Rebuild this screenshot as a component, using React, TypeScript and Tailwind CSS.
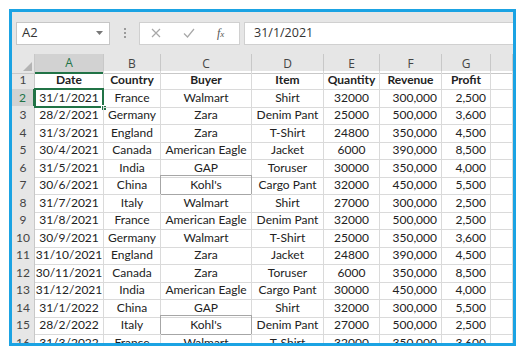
import React from 'react';

const rows: string[][] = [
  ['Date', 'Country', 'Buyer', 'Item', 'Quantity', 'Revenue', 'Profit'],
  ['31/1/2021', 'France', 'Walmart', 'Shirt', '32000', '300,000', '2,500'],
  ['28/2/2021', 'Germany', 'Zara', 'Denim Pant', '25000', '500,000', '3,600'],
  ['31/3/2021', 'England', 'Zara', 'T-Shirt', '24800', '350,000', '4,500'],
  ['30/4/2021', 'Canada', 'American Eagle', 'Jacket', '6000', '390,000', '8,500'],
  ['31/5/2021', 'India', 'GAP', 'Toruser', '30000', '350,000', '4,000'],
  ['30/6/2021', 'China', "Kohl's", 'Cargo Pant', '32000', '450,000', '5,500'],
  ['31/7/2021', 'Italy', 'Walmart', 'Shirt', '27000', '300,000', '2,500'],
  ['31/8/2021', 'France', 'American Eagle', 'Denim Pant', '32000', '500,000', '2,500'],
  ['30/9/2021', 'Germany', 'Walmart', 'T-Shirt', '25000', '350,000', '3,600'],
  ['31/10/2021', 'England', 'Zara', 'Jacket', '24800', '390,000', '4,500'],
  ['30/11/2021', 'Canada', 'Zara', 'Toruser', '6000', '350,000', '8,500'],
  ['31/12/2021', 'India', 'American Eagle', 'Cargo Pant', '30000', '450,000', '4,000'],
  ['31/1/2022', 'China', 'GAP', 'Shirt', '32000', '300,000', '5,500'],
  ['28/2/2022', 'Italy', "Kohl's", 'Denim Pant', '27000', '500,000', '2,500'],
  ['31/3/2022', 'France', 'Walmart', 'T-Shirt', '32000', '350,000', '3,600'],
];

const letters = ['A', 'B', 'C', 'D', 'E', 'F', 'G', ''];
const gridCols = 'grid grid-cols-[23px_69px_57px_91px_72px_56px_62px_49px_1fr]';

function FormulaBar() {
  return (
    <div className="flex items-center h-[42px] bg-[#e6e6e6] pl-1 pb-[9px] pt-[9px]">
      <div className="flex items-center justify-between w-[94px] h-[23px] bg-white border border-[#c6c6c6] pl-[5px] pr-[6px]">
        <span className="text-[13px] text-[#333]">A2</span>
        <svg width="7" height="4" viewBox="0 0 7 4">
          <path d="M0 0h7L3.5 4z" fill="#777" />
        </svg>
      </div>
      <div className="flex flex-col gap-[2px] w-[29px] items-center">
        <span className="w-[2px] h-[2px] bg-[#9a9a9a]" />
        <span className="w-[2px] h-[2px] bg-[#9a9a9a]" />
        <span className="w-[2px] h-[2px] bg-[#9a9a9a]" />
      </div>
      <div className="flex items-center w-[101px] h-[23px] bg-white border border-[#d0d0d0]">
        <svg className="ml-[11px]" width="10" height="10" viewBox="0 0 10 10">
          <path d="M1 1l8 8M9 1l-8 8" stroke="#a8a8a8" strokeWidth="1.2" />
        </svg>
        <svg className="ml-[22px]" width="12" height="10" viewBox="0 0 12 10">
          <path d="M1 5.5l3.5 3.5L11 1" stroke="#a8a8a8" strokeWidth="1.2" fill="none" />
        </svg>
        <span className="ml-[22px] italic text-[#555] font-['Liberation_Serif',serif] text-[12px] leading-none">
          f<span className="text-[9px]">x</span>
        </span>
      </div>
      <div className="flex items-center flex-1 h-[23px] bg-white border border-[#d0d0d0] border-r-0 ml-1 pl-[9px]">
        <span className="text-[12.5px] text-[#333]">31/1/2021</span>
      </div>
    </div>
  );
}

function ColumnHeaders() {
  return (
    <div className={`${gridCols} h-[17px] bg-[#e6e6e6] text-[12px] text-[#444]`}>
      <div className="relative border-r border-b border-[#c8c8c8]">
        <svg className="absolute right-[2px] bottom-[2px]" width="9" height="9" viewBox="0 0 9 9">
          <path d="M9 0v9H0z" fill="#b4b4b4" />
        </svg>
      </div>
      {letters.map((l, i) => (
        <div
          key={i}
          className={
            i === 0
              ? 'flex items-center justify-center bg-[#d2d2d2] text-[#217346] border-r border-[#c8c8c8] border-b-2 border-b-[#217346]'
              : 'flex items-center justify-center border-r border-b border-[#c8c8c8]'
          }
        >
          {l}
        </div>
      ))}
    </div>
  );
}

function Row({ n, cells }: { n: number; cells: string[] }) {
  const header = n === 1;
  const selRow = n === 2;
  return (
    <div className={`${gridCols} h-[17.5px] text-[12px] text-[#222]`}>
      <div
        className={
          selRow
            ? 'flex items-center justify-center bg-[#d2d2d2] text-[#217346] border-b border-[#c8c8c8] border-r-2 border-r-[#217346] text-[12px]'
            : 'flex items-center justify-center bg-[#e6e6e6] text-[#444] border-r border-b border-[#c8c8c8] text-[12px]'
        }
      >
        {n}
      </div>
      {cells.map((c, i) => {
        const right = !header && i >= 5;
        const kohls = c === "Kohl's";
        const sel = selRow && i === 0;
        return (
          <div
            key={i}
            className={[
              'relative flex items-center whitespace-nowrap border-r border-b border-[#dadada] px-1',
              right ? 'justify-end' : 'justify-center',
              header ? 'font-bold' : '',
            ].join(' ')}
          >
            {c}
            {kohls && <div className="absolute -left-px -top-px right-[-1px] bottom-[-1px] border border-[#a6a6a6]" />}
            {sel && (
              <>
                <div className="absolute -left-px -top-px right-[-1px] bottom-[-1px] border-2 border-[#217346]" />
                <div className="absolute right-[-4px] bottom-[-4px] w-[6px] h-[6px] bg-[#217346] border border-white" />
              </>
            )}
          </div>
        );
      })}
      <div className="border-r border-b border-[#dadada]" />
    </div>
  );
}

export default function App() {
  return (
    <div className="w-[526px] h-[356px] bg-white pt-[9px] pl-[9px] font-['Lato',sans-serif]">
      <div className="w-[507px] h-[337px] border-[3px] border-[#1ba3e3] overflow-hidden flex flex-col bg-white">
        <div className="font-['Open_Sans',sans-serif]">
          <FormulaBar />
        </div>
        <div className="font-['Open_Sans',sans-serif]">
          <ColumnHeaders />
        </div>
        {rows.map((r, i) => (
          <Row key={i} n={i + 1} cells={r} />
        ))}
      </div>
    </div>
  );
}
